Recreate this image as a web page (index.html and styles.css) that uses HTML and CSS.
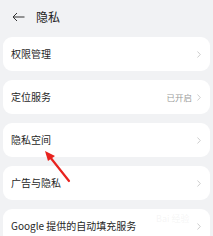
FILE: index.html
```html
<!DOCTYPE html>
<html>
<head>
<meta charset="utf-8">
<link rel="stylesheet" href="styles.css">
</head>
<body>
<div class="page">
  <div class="header">
    <svg class="back" width="13" height="10" viewBox="0 0 13 10"><path d="M12.5 5H1M5 1L1 5l4 4" fill="none" stroke="#333" stroke-width="1"/></svg>
    <span class="title">隐私</span>
  </div>
  <div class="list">
    <div class="card"><span class="label">权限管理</span><span class="right"><svg class="chev" width="4" height="7" viewBox="0 0 4 7"><path d="M0.5 0.5L3.3 3.5 0.5 6.5" fill="none" stroke="#c8c8c8" stroke-width="0.9"/></svg></span></div>
    <div class="card"><span class="label">定位服务</span><span class="right"><span class="value">已开启</span><svg class="chev" width="4" height="7" viewBox="0 0 4 7"><path d="M0.5 0.5L3.3 3.5 0.5 6.5" fill="none" stroke="#c8c8c8" stroke-width="0.9"/></svg></span></div>
    <div class="card"><span class="label">隐私空间</span><span class="right"><svg class="chev" width="4" height="7" viewBox="0 0 4 7"><path d="M0.5 0.5L3.3 3.5 0.5 6.5" fill="none" stroke="#c8c8c8" stroke-width="0.9"/></svg></span></div>
    <div class="card"><span class="label">广告与隐私</span><span class="right"><svg class="chev" width="4" height="7" viewBox="0 0 4 7"><path d="M0.5 0.5L3.3 3.5 0.5 6.5" fill="none" stroke="#c8c8c8" stroke-width="0.9"/></svg></span></div>
    <div class="card"><span class="label">Google 提供的自动填充服务</span><span class="right"><svg class="chev" width="4" height="7" viewBox="0 0 4 7"><path d="M0.5 0.5L3.3 3.5 0.5 6.5" fill="none" stroke="#c8c8c8" stroke-width="0.9"/></svg></span></div>
  </div>
  <span class="watermark">Bai 经验</span>
  <svg class="pointer" width="213" height="236" viewBox="0 0 213 236">
    <path d="M69 181 L50 157" stroke="#e8231f" stroke-width="2.2" stroke-linecap="round"/>
    <path d="M45 151 L55 156 L48 161 Z" fill="#e8231f"/>
  </svg>
</div>
</body>
</html>
```
FILE: styles.css
```css
html, body {
  margin: 0;
  padding: 0;
  background: #f1f2f4;
}
.page {
  position: relative;
  width: 213px;
  height: 236px;
  overflow: hidden;
  font-family: "Noto Sans CJK SC", "Noto Sans", sans-serif;
  color: #1e1e1e;
}
.header {
  display: flex;
  align-items: center;
  height: 33px;
  padding-left: 12px;
  box-sizing: border-box;
}
.back {
  display: block;
}
.title {
  margin-left: 11px;
  font-size: 12px;
  color: #222;
  line-height: 1;
}
.list {
  display: flex;
  flex-direction: column;
  gap: 9px;
  padding: 4px 3px 0 3px;
}
.card {
  height: 34px;
  background: #ffffff;
  border-radius: 9px;
  display: flex;
  align-items: center;
  justify-content: space-between;
  padding: 0 9px 0 8px;
}
.label {
  font-size: 10px;
  line-height: 1;
  color: #1f1f1f;
}
.right {
  display: flex;
  align-items: center;
  gap: 5px;
}
.value {
  font-size: 8.5px;
  color: #9a9a9a;
  line-height: 1;
}
.chev {
  display: block;
}
.watermark {
  position: absolute;
  left: 156px;
  top: 212px;
  font-size: 9px;
  color: rgba(200, 200, 200, 0.18);
}
.pointer {
  position: absolute;
  left: 0;
  top: 0;
  pointer-events: none;
}
```
